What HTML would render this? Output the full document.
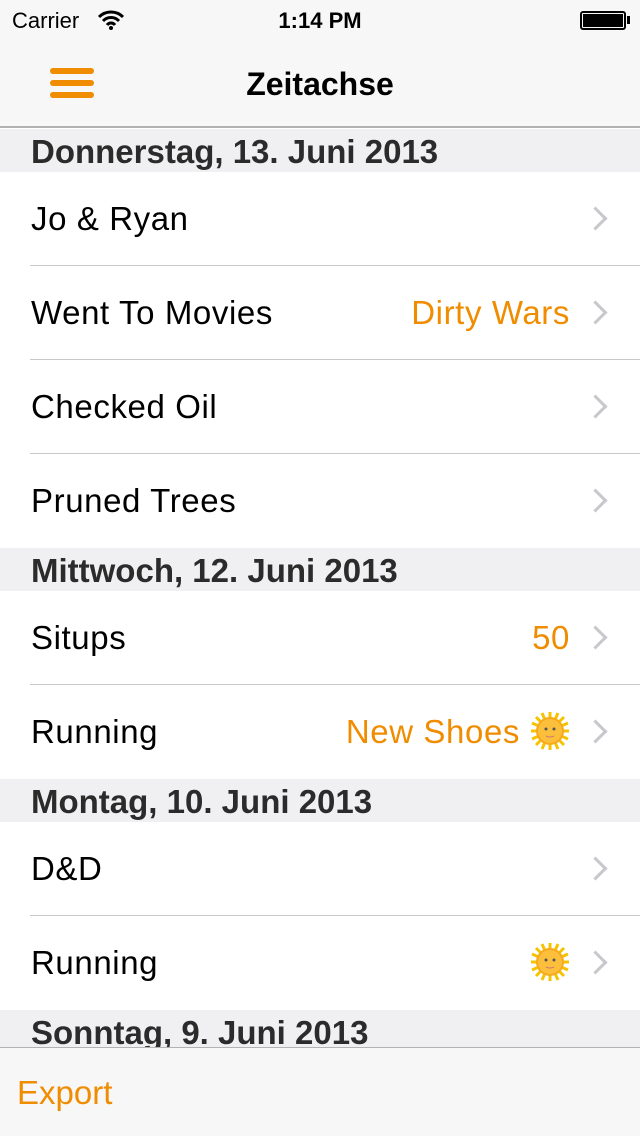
<!DOCTYPE html>
<html><head><meta charset="utf-8"><style>
*{margin:0;padding:0;box-sizing:border-box}
body{width:640px;height:1136px;overflow:hidden;background:#fff;font-family:"Liberation Sans",sans-serif;position:relative}
.status{position:absolute;top:0;left:0;width:640px;height:40px;background:#f7f7f7;font-size:22px;color:#000}
.nav{position:absolute;top:40px;left:0;width:640px;height:88px;background:#f7f7f7;border-bottom:2px solid #b2b2b2}
.nav .t{position:absolute;width:640px;text-align:center;top:26px;font-size:32px;font-weight:bold}
.bar{position:absolute;left:50px;width:44px;height:6px;border-radius:3px;background:#f08c00}
.list{position:absolute;top:129px;left:0;width:640px}
.h{height:43px;background:#f0f0f2;font-size:33px;font-weight:bold;color:#2b2b2b;padding-left:31px;line-height:46px}
.r{height:94px;position:relative;font-size:33px;letter-spacing:0.6px;color:#000;line-height:94px;padding-left:31px}
.r.s:after{content:"";position:absolute;left:30px;right:0;bottom:0;height:1px;background:#c8c7cc}
.v{position:absolute;right:70px;top:0;color:#f08c00}
.c{position:absolute;right:36px;top:38px;width:17px;height:17px;border-right:3px solid #c7c7cc;border-top:3px solid #c7c7cc;transform:rotate(45deg)}
.sun{display:inline-block;width:40px;height:40px;vertical-align:middle;margin-left:10px;margin-top:-6px}
.tb{position:absolute;top:1047px;left:0;width:640px;height:89px;background:#f7f7f7;border-top:1px solid #b2b2b2}
.tb span{position:absolute;left:17px;top:26px;font-size:33px;color:#f08c00}
</style></head><body>
<div class="status"><span style="position:absolute;left:12px;top:8px">Carrier</span>
<svg style="position:absolute;left:98px;top:10px" width="26" height="20" viewBox="0 0 26 20"><path d="M1 7a17 17 0 0 1 24 0M5 11a11 11 0 0 1 16 0M9 15a5 5 0 0 1 8 0" stroke="#000" stroke-width="3" fill="none"/><circle cx="13" cy="18" r="2"/></svg>
<span style="position:absolute;left:0;width:640px;text-align:center;top:8px;font-weight:bold">1:14 PM</span>
<div style="position:absolute;left:580px;top:11px;width:46px;height:19px;border:2px solid #000;border-radius:3px;padding:1px"><div style="background:#000;width:100%;height:100%"></div></div>
<div style="position:absolute;left:627px;top:16px;width:3px;height:8px;background:#000"></div></div>
<div class="nav"><div class="bar" style="top:28px"></div><div class="bar" style="top:40px"></div><div class="bar" style="top:52px"></div><div class="t">Zeitachse</div></div>
<svg width="0" height="0" style="position:absolute"><defs><g id="sun"><g stroke="#f5c400" stroke-width="3"><path d="M20 1v38M1 20h38M6 6l28 28M34 6L6 34M12 2l16 36M28 2L12 38M2 12l36 16M2 28l36-16"/></g><circle cx="20" cy="20" r="14" fill="#f7a91d"/><circle cx="20" cy="20" r="12" fill="#fbbf3c"/><circle cx="16" cy="18" r="1.5" fill="#555"/><circle cx="24" cy="18" r="1.5" fill="#555"/><path d="M16 25q4 2 8 0" stroke="#c77" fill="none"/></g></defs></svg>
<div class="list">
<div class="h">Donnerstag, 13. Juni 2013</div>
<div class="r s">Jo &amp; Ryan<div class="c"></div></div>
<div class="r s">Went To Movies<span class="v">Dirty Wars</span><div class="c"></div></div>
<div class="r s">Checked Oil<div class="c"></div></div>
<div class="r">Pruned Trees<div class="c"></div></div>
<div class="h">Mittwoch, 12. Juni 2013</div>
<div class="r s">Situps<span class="v">50</span><div class="c"></div></div>
<div class="r">Running<span class="v">New Shoes<svg class="sun" viewBox="0 0 40 40"><use href="#sun"/></svg></span><div class="c"></div></div>
<div class="h">Montag, 10. Juni 2013</div>
<div class="r s">D&amp;D<div class="c"></div></div>
<div class="r">Running<span class="v"><svg class="sun" viewBox="0 0 40 40"><use href="#sun"/></svg></span><div class="c"></div></div>
<div class="h">Sonntag, 9. Juni 2013</div>
</div>
<div class="tb"><span>Export</span></div>
</body></html>
